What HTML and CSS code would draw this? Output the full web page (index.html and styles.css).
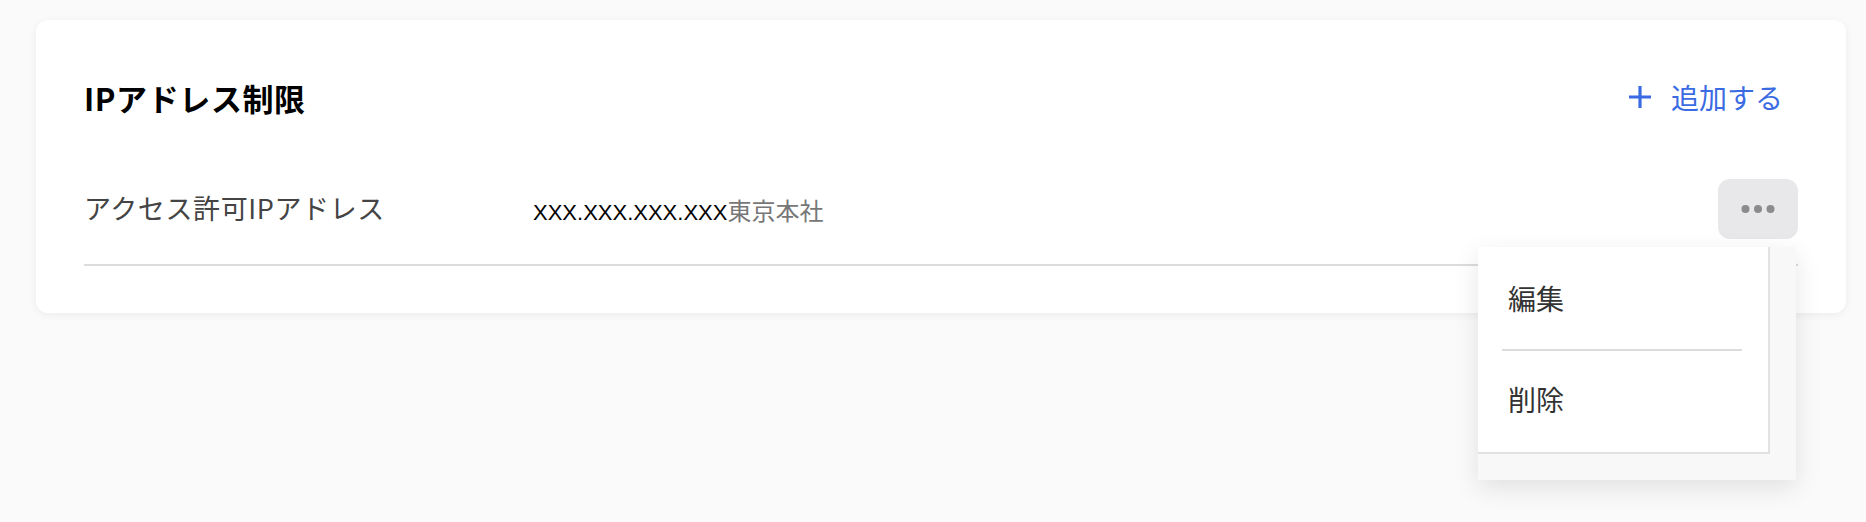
FILE: index.html
```html
<!DOCTYPE html>
<html lang="ja">
<head>
    <meta charset="UTF-8">
    <meta name="viewport" content="width=device-width, initial-scale=1.0">
    <title>IPアドレス制限</title>
    <link rel="stylesheet" href="styles.css">
</head>
<body>

    <!-- IP restriction card -->
    <section class="card">
        <div class="card-header">
            <h2 class="card-title">IPアドレス制限</h2>
            <button class="add-button">
                <svg class="plus-icon" width="24" height="24" viewBox="0 0 24 24">
                    <path d="M12 1v22M1 12h22" stroke="currentColor" stroke-width="3.2" fill="none"/>
                </svg>
                <span>追加する</span>
            </button>
        </div>

        <div class="ip-row">
            <div class="ip-label">アクセス許可IPアドレス</div>
            <div class="ip-value">XXX.XXX.XXX.XXX<span class="ip-note">東京本社</span></div>
            <div class="more-wrap">
                <button class="more-button" aria-label="メニュー">
                    <svg width="34" height="10" viewBox="0 0 34 10">
                        <circle cx="4.5" cy="5" r="4" fill="#8b8b8b"/>
                        <circle cx="17" cy="5" r="4" fill="#8b8b8b"/>
                        <circle cx="29.5" cy="5" r="4" fill="#8b8b8b"/>
                    </svg>
                </button>

                <!-- Dropdown menu -->
                <div class="menu">
                    <ul class="menu-list">
                        <li class="menu-item">編集</li>
                        <li class="menu-divider"></li>
                        <li class="menu-item">削除</li>
                    </ul>
                </div>
            </div>
        </div>
    </section>

</body>
</html>
```

FILE: styles.css
```css
/* General Body Styles */
html {
    height: 100%;
}

body {
    font-family: "Noto Sans CJK JP", "Noto Sans", sans-serif;
    background-color: #fafafa;
    margin: 0;
    padding: 20px 20px 0 36px;
    min-height: 100%;
    box-sizing: border-box;
}

/* Card */
.card {
    background-color: #fff;
    border-radius: 12px;
    box-shadow: 0 2px 8px rgba(0, 0, 0, 0.06);
    padding: 55px 48px 47px;
}

.card-header {
    display: flex;
    justify-content: space-between;
    align-items: center;
    height: 44px;
}

.card-title {
    margin: 0;
    font-size: 31px;
    font-weight: bold;
    letter-spacing: 0.6px;
    color: #000;
}

.add-button {
    display: flex;
    align-items: center;
    gap: 19px;
    padding: 0 15px 0 0;
    border: none;
    background: none;
    color: #3a6be2;
    font-family: inherit;
    font-size: 28px;
    cursor: pointer;
}

.plus-icon {
    display: block;
}

/* IP row */
.ip-row {
    display: flex;
    align-items: center;
    margin-top: 60px;
    padding-bottom: 25px;
    border-bottom: 2px solid #dcdcdc;
}

.ip-label {
    width: 449px;
    font-size: 27px;
    letter-spacing: 0.6px;
    color: #444;
    margin-top: -4px;
}

.ip-value {
    flex: 1;
    font-family: "Liberation Sans", "Noto Sans CJK JP", sans-serif;
    font-size: 22px;
    color: #000;
}

.ip-note {
    font-family: "Noto Sans CJK JP", sans-serif;
    font-size: 24px;
    color: #777;
}

.more-wrap {
    position: relative;
}

.more-button {
    display: flex;
    align-items: center;
    justify-content: center;
    width: 80px;
    height: 60px;
    border: none;
    border-radius: 12px;
    background-color: #e8e7e9;
    cursor: pointer;
}

/* Dropdown menu */
.menu {
    position: absolute;
    top: 68px;
    right: 2px;
    width: 318px;
    height: 233px;
    background-color: #f8f8f9;
    box-shadow: 0 8px 24px rgba(0, 0, 0, 0.1);
    z-index: 10;
}

.menu-list {
    list-style-type: none;
    margin: 0;
    padding: 0;
    width: 290px;
    background-color: #fff;
    border-right: 2px solid #e2e2e2;
    border-bottom: 2px solid #e2e2e2;
}

.menu-item {
    display: flex;
    align-items: center;
    box-sizing: border-box;
    height: 102px;
    padding-left: 30px;
    font-size: 28px;
    color: #333;
    cursor: pointer;
}

.menu-item:last-child {
    height: 101px;
    padding-bottom: 5px;
}

.menu-divider {
    height: 2px;
    margin: 0 26px 0 24px;
    background-color: #dcdcdc;
}
```
